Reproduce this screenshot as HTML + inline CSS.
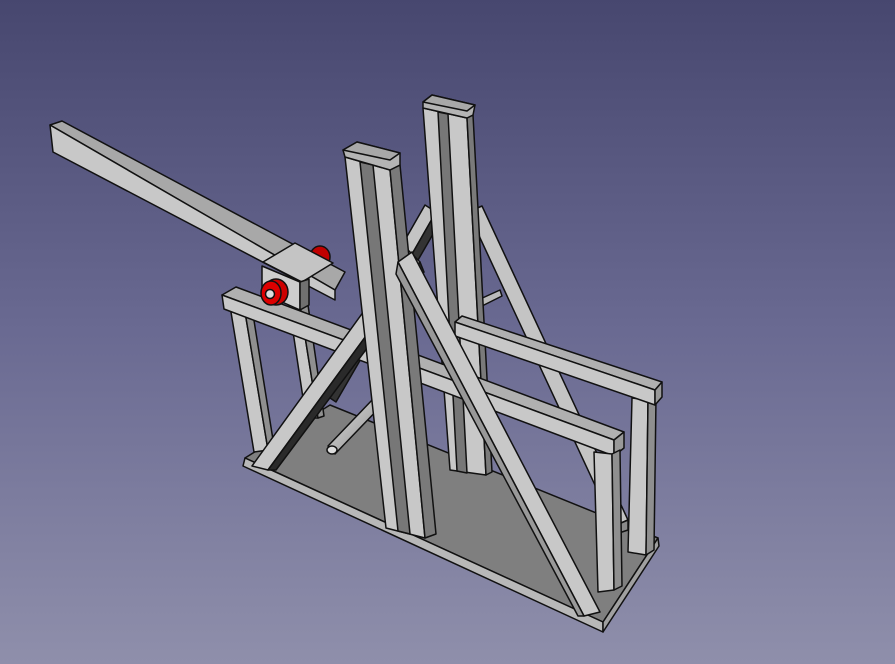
<!DOCTYPE html>
<html><head><meta charset="utf-8"><style>
html,body{margin:0;padding:0;width:895px;height:664px;overflow:hidden}
svg{display:block}
</style></head><body>
<svg width="895" height="664" viewBox="0 0 895 664" xmlns="http://www.w3.org/2000/svg">
<defs>
<linearGradient id="bg" x1="0" y1="0" x2="0" y2="1">
<stop offset="0" stop-color="#47476f"/>
<stop offset="0.5" stop-color="#6a6a92"/>
<stop offset="1" stop-color="#8f8fab"/>
</linearGradient>
<linearGradient id="rod" x1="0" y1="0" x2="1" y2="1">
<stop offset="0" stop-color="#e0e0e0"/><stop offset="1" stop-color="#8a8a8a"/>
</linearGradient>
</defs>
<rect width="895" height="664" fill="url(#bg)"/>
<g stroke="#111" stroke-width="1.5" stroke-linejoin="round">
<!-- base plate -->
<polygon points="245,458 330,405 658,538 603,622" fill="#7f7f7f"/>
<polygon points="245,458 603,622 603,632 243,466" fill="#b8b8b8"/>
<polygon points="603,622 658,538 659,546 603,632" fill="#a0a0a0"/>

<!-- back right diagonal brace -->
<polygon points="468,212 482,206 628,520 614,526" fill="#c4c4c4"/>
<polygon points="614,526 628,520 628,530 616,534" fill="#8a8a8a"/>
<!-- back left diagonal -->
<polygon points="425,205 436,212 330,398 318,392" fill="#c4c4c4"/>
<polygon points="436,212 440,222 336,402 330,398" fill="#333"/>
<!-- small back cross piece -->
<polygon points="478,300 500,290 502,296 482,306" fill="#bbb"/>

<!-- left legs -->
<polygon points="289,305 300,305 318,418 306,418" fill="#c8c8c8"/>
<polygon points="300,305 308,305 324,416 318,418" fill="#909090"/>
<polygon points="230,306 244,306 268,450 254,452" fill="#c8c8c8"/>
<polygon points="244,306 252,308 274,446 268,450" fill="#8f8f8f"/>

<!-- back right leg -->
<polygon points="632,398 648,400 646,555 628,552" fill="#c8c8c8"/>
<polygon points="648,400 656,398 654,550 646,555" fill="#8f8f8f"/>

<!-- back tall post -->
<polygon points="423,108 467,118 486,475 450,470" fill="#c8c8c8"/>
<polygon points="467,118 473,115 492,472 486,475" fill="#7a7a7a"/>
<polygon points="438,112 448,114 467,473 457,471" fill="#777"/>
<polygon points="423,102 432,95 475,105 473,115 467,118 423,108" fill="#b4b4b4"/>
<polygon points="423,102 432,95 475,105 467,111" fill="#a8a8a8"/>

<!-- upper right rail -->
<polygon points="455,322 462,316 662,382 655,390" fill="#b0b0b0"/>
<polygon points="455,322 655,390 655,405 455,336" fill="#c8c8c8"/>
<polygon points="655,390 662,382 662,397 655,405" fill="#999"/>

<!-- left rail (long) -->
<polygon points="222,295 236,287 624,432 614,440" fill="#b0b0b0"/>
<polygon points="222,295 614,440 614,456 224,309" fill="#c8c8c8"/>
<polygon points="614,440 624,432 624,448 614,456" fill="#999"/>

<!-- rod -->
<polygon points="328,446 374,398 382,405 335,454" fill="url(#rod)"/>
<ellipse cx="332" cy="450" rx="5" ry="4" fill="#ddd"/>

<!-- back wheel -->
<ellipse cx="320" cy="257" rx="10" ry="11" fill="#c00000"/>
<!-- arm beam -->
<polygon points="50,125 62,121 345,272 335,290" fill="#a8a8a8"/>
<polygon points="50,125 335,290 335,300 53,152" fill="#c8c8c8"/>

<!-- pivot block -->
<polygon points="263,262 295,243 333,263 302,282" fill="#c4c4c4"/>
<polygon points="262,266 300,282 300,310 262,293" fill="#cdcdcd"/>
<polygon points="300,282 309,279 309,305 300,310" fill="#707070"/>
<ellipse cx="276" cy="292" rx="12" ry="13" fill="#cc0000"/>
<ellipse cx="271" cy="293" rx="10" ry="12" fill="#dd0000"/>
<ellipse cx="270" cy="294" rx="4.5" ry="4.5" fill="#ddd"/>

<!-- front / diagonal -->
<polygon points="408,250 420,262 268,470 252,466" fill="#c8c8c8"/>
<polygon points="420,262 424,272 276,470 268,470" fill="#2a2a2a"/>

<!-- front tall post -->
<polygon points="345,157 390,170 425,538 386,528" fill="#c8c8c8"/>
<polygon points="390,170 400,165 436,534 425,538" fill="#7a7a7a"/>
<polygon points="360,162 373,165 410,534 398,531" fill="#777"/>
<polygon points="343,150 357,142 400,153 400,165 390,170 345,157" fill="#b4b4b4"/>
<polygon points="343,150 357,142 400,153 390,160" fill="#a8a8a8"/>

<!-- front \ diagonal -->
<polygon points="398,262 412,252 600,612 584,616" fill="#c8c8c8"/>
<polygon points="398,262 584,616 578,616 396,274" fill="#999"/>

<!-- front right leg -->
<polygon points="594,452 612,454 614,590 598,592" fill="#c8c8c8"/>
<polygon points="612,454 620,450 622,586 614,590" fill="#8f8f8f"/>
</g>
</svg>
</body></html>
